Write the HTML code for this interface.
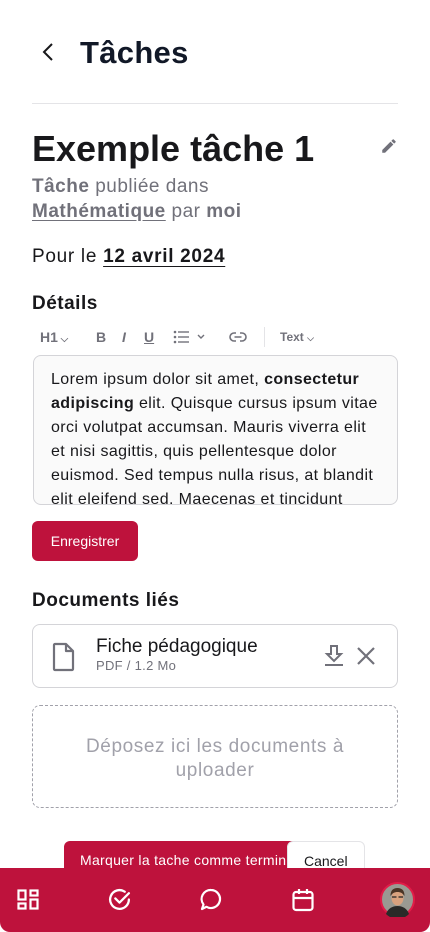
<!DOCTYPE html>
<html><head><meta charset="utf-8"><style>
*{box-sizing:border-box;margin:0;padding:0}
body{width:430px;height:932px;overflow:hidden;background:#fff;font-family:"Liberation Sans",sans-serif;position:relative;color:#18181b}
.abs{position:absolute;white-space:nowrap}
</style></head><body>
<svg class="abs" style="left:40px;top:42px" width="16" height="20" viewBox="0 0 16 20"><path d="M12 2 L4 10 L12 18" fill="none" stroke="#18181b" stroke-width="2"/></svg>
<div class="abs" style="left:80px;top:35px;font-size:31px;font-weight:bold;color:#111827;letter-spacing:0.3px">Tâches</div>
<div class="abs" style="left:32px;top:103px;width:366px;height:1px;background:#e4e4e7"></div>
<div class="abs" style="left:32px;top:128px;font-size:36px;font-weight:bold;color:#18181b;letter-spacing:0px">Exemple tâche 1</div>
<svg class="abs" style="left:380px;top:137px" width="18" height="18" viewBox="0 0 24 24"><path d="M3 17.25V21h3.75L17.8 9.94l-3.75-3.75L3 17.25zM20.7 7.04a1 1 0 000-1.41l-2.34-2.34a1 1 0 00-1.41 0l-1.830 1.83 3.75 3.75 1.83-1.83z" fill="#71717a"/></svg>
<div class="abs" style="left:32px;top:174px;font-size:19px;line-height:25px;color:#71717a;letter-spacing:0.5px"><b>Tâche</b> publiée dans<br><b style="text-decoration:underline;text-underline-offset:3px">Mathématique</b> par <b>moi</b></div>
<div class="abs" style="left:32px;top:246px;font-size:19px;color:#18181b;letter-spacing:0.7px">Pour le <b style="text-decoration:underline;text-underline-offset:4px">12 avril 2024</b></div>
<div class="abs" style="left:32px;top:293px;font-size:19px;font-weight:bold;letter-spacing:0.5px">Détails</div>
<div class="abs" style="left:40px;top:329px;font-size:14px;font-weight:bold;color:#71717a">H1<span style="font-size:10px"> ⌵</span></div>
<div class="abs" style="left:96px;top:329px;font-size:14px;font-weight:bold;color:#71717a">B</div>
<div class="abs" style="left:122px;top:329px;font-size:14px;font-weight:bold;font-style:italic;color:#71717a">I</div>
<div class="abs" style="left:144px;top:329px;font-size:14px;font-weight:bold;text-decoration:underline;color:#71717a">U</div>
<svg class="abs" style="left:173px;top:330px" width="36" height="14" viewBox="0 0 36 14"><g fill="#71717a"><circle cx="2" cy="2" r="1.3"/><circle cx="2" cy="7" r="1.3"/><circle cx="2" cy="12" r="1.3"/><rect x="5" y="1.3" width="11" height="1.4"/><rect x="5" y="6.3" width="11" height="1.4"/><rect x="5" y="11.3" width="11" height="1.4"/></g><path d="M25 5l3 3 3-3" fill="none" stroke="#71717a" stroke-width="1.4"/></svg>
<svg class="abs" style="left:229px;top:331px" width="18" height="12" viewBox="0 0 18 12"><path d="M7 2H5a4 4 0 000 8h2M11 2h2a4 4 0 010 8h-2M5.5 6h7" fill="none" stroke="#71717a" stroke-width="1.6"/></svg>
<div class="abs" style="left:264px;top:327px;width:1px;height:20px;background:#e4e4e7"></div>
<div class="abs" style="left:280px;top:330px;font-size:12px;font-weight:bold;color:#71717a">Text <span style="font-size:9px">⌵</span></div>
<div class="abs" style="left:33px;top:355px;width:365px;height:150px;border:1px solid #d4d4d8;border-radius:8px;background:#fafafa;overflow:hidden;padding:12px 17px;font-size:16px;letter-spacing:0.4px;line-height:24px;color:#18181b;white-space:normal">Lorem ipsum dolor sit amet, <b>consectetur adipiscing</b> elit. Quisque cursus ipsum vitae orci volutpat accumsan. Mauris viverra elit et nisi sagittis, quis pellentesque dolor euismod. Sed tempus nulla risus, at blandit elit eleifend sed. Maecenas et tincidunt</div>
<div class="abs" style="left:32px;top:521px;width:106px;height:40px;background:#be123c;border-radius:6px;color:#fff;font-size:14px;line-height:40px;text-align:center">Enregistrer</div>
<div class="abs" style="left:32px;top:590px;font-size:19px;font-weight:bold;letter-spacing:0.5px">Documents liés</div>
<div class="abs" style="left:32px;top:624px;width:366px;height:64px;border:1px solid #d4d4d8;border-radius:8px"></div>
<svg class="abs" style="left:52px;top:642px" width="24" height="30" viewBox="0 0 24 30"><path d="M3 2h11l7 7v18a1 1 0 01-1 1H3a1 1 0 01-1-1V3a1 1 0 011-1zM14 2v7h7" fill="none" stroke="#71717a" stroke-width="2.2" stroke-linejoin="round"/></svg>
<div class="abs" style="left:96px;top:636px;font-size:19px;color:#18181b;letter-spacing:0px">Fiche pédagogique</div>
<div class="abs" style="left:96px;top:658px;font-size:13px;color:#71717a;letter-spacing:0.3px">PDF / 1.2 Mo</div>
<svg class="abs" style="left:323px;top:644px" width="22" height="24" viewBox="0 0 22 24"><path d="M8 2h6v8h4l-7 7-7-7h4z" fill="none" stroke="#71717a" stroke-width="2"/><rect x="2" y="20" width="18" height="2" fill="#71717a"/></svg>
<svg class="abs" style="left:356px;top:646px" width="20" height="20" viewBox="0 0 20 20"><path d="M2 2l16 16M18 2L2 18" stroke="#71717a" stroke-width="2.2"/></svg>
<div class="abs" style="left:32px;top:705px;width:366px;height:103px;border:1px dashed #a1a1aa;border-radius:8px;text-align:center;padding-top:29px;font-size:19px;letter-spacing:0.6px;line-height:24px;color:#a1a1aa">Déposez ici les documents à<br>uploader</div>
<div class="abs" style="left:64px;top:841px;width:240px;height:40px;background:#be123c;border-radius:6px 0 0 0;color:#fff;font-size:14px;letter-spacing:0.3px;padding:11px 0 0 16px;overflow:hidden">Marquer la tache comme terminée</div>
<div class="abs" style="left:287px;top:841px;width:78px;height:40px;background:#fff;border:1px solid #e4e4e7;border-radius:6px;font-size:14px;color:#18181b;padding:11px 0 0 16px">Cancel</div>
<div class="abs" style="left:0;top:868px;width:430px;height:64px;background:#be123c;border-radius:0 0 10px 10px"></div>
<svg class="abs" style="left:17px;top:889px" width="22" height="22" viewBox="0 0 22 22"><g fill="none" stroke="#fff" stroke-width="2.2"><rect x="1.5" y="1.5" width="7" height="9"/><rect x="13.5" y="1.5" width="7" height="5"/><rect x="1.5" y="14.5" width="7" height="5"/><rect x="13.5" y="10.5" width="7" height="9"/></g></svg>
<svg class="abs" style="left:107px;top:887px" width="25" height="25" viewBox="0 0 24 24"><path d="M21 12a9 9 0 11-4-7.5" fill="none" stroke="#fff" stroke-width="2.2" stroke-linecap="round"/><path d="M8 11l4 4 9-9" fill="none" stroke="#fff" stroke-width="2.2" stroke-linecap="round" stroke-linejoin="round"/></svg>
<svg class="abs" style="left:200px;top:888px" width="22" height="24" viewBox="0 0 22 24"><path d="M11 2a9 9 0 11-4.5 16.8L2 21l1.5-4.5A9 9 0 0111 2z" fill="none" stroke="#fff" stroke-width="2.2" stroke-linejoin="round"/></svg>
<svg class="abs" style="left:292px;top:888px" width="22" height="24" viewBox="0 0 22 24"><rect x="1.5" y="4" width="19" height="18" rx="2.5" fill="none" stroke="#fff" stroke-width="2.2"/><path d="M1.5 10h19M7 1v5M15 1v5" stroke="#fff" stroke-width="2.2"/></svg>
<svg class="abs" style="left:380px;top:882px" width="35" height="35" viewBox="0 0 35 35"><circle cx="17.5" cy="17.5" r="16.5" fill="#9a9a92" stroke="#e11d48" stroke-width="2"/><path d="M6 32c2-6 7-8 11.5-8s9.5 2 11.5 8a16 16 0 01-23 0z" fill="#2a2a28"/><ellipse cx="17.5" cy="16" rx="6" ry="7.5" fill="#d9a27e"/><path d="M10.5 14c0-6 3-8 7-8s7 2 7 8c-2-3-4-4-7-4s-5 1-7 4z" fill="#4a3424"/><path d="M12 15h4.5M18.5 15h4.5" stroke="#222" stroke-width="1.2"/></svg>
</body></html>
